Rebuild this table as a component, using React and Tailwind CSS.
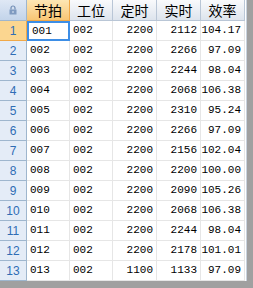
import React from "react";

const rows = [
	["001", "002", "2200", "2112", "104.17"],
	["002", "002", "2200", "2266", "97.09"],
	["003", "002", "2200", "2244", "98.04"],
	["004", "002", "2200", "2068", "106.38"],
	["005", "002", "2200", "2310", "95.24"],
	["006", "002", "2200", "2266", "97.09"],
	["007", "002", "2200", "2156", "102.04"],
	["008", "002", "2200", "2200", "100.00"],
	["009", "002", "2200", "2090", "105.26"],
	["010", "002", "2200", "2068", "106.38"],
	["011", "002", "2200", "2244", "98.04"],
	["012", "002", "2200", "2178", "101.01"],
	["013", "002", "1100", "1133", "97.09"],
];

const headers = ["节拍", "工位", "定时", "实时", "效率"];

const LockIcon = () => (
	<svg width="8" height="10" viewBox="0 0 8 10">
		<path d="M2 4.5V3a2 2 0 0 1 4 0v1.5" fill="none" stroke="#6f8bb3" strokeWidth="1.2" />
		<rect x="0.5" y="4.5" width="7" height="5" fill="#7f9ac0" />
		<rect x="3.5" y="6" width="1" height="2" fill="#dfe8f4" />
	</svg>
);

export default function App() {
	return (
		<div className="w-[253px] h-[288px] bg-[#a0a0a0] overflow-hidden">
			<div className="w-[247px] bg-white border-r border-[#c8d2de]">
				<div className="grid grid-cols-[27px_43px_43px_44px_44px_44px]">
					{/* Header */}
					<div className="h-[21px] flex items-center justify-center bg-gradient-to-b from-[#dfe8f5] to-[#c3d4ea] border-r border-b border-[#9eb6ce]">
						<LockIcon />
					</div>
					{headers.map((h, i) => (
						<div
							key={h}
							className={
								i === 0
									? "h-[21px] flex items-center justify-center text-[14px] text-black bg-gradient-to-b from-[#fde6b4] to-[#f8c674] border-r border-b border-[#f0a848] font-['Noto_Sans_CJK_SC',sans-serif]"
									: "h-[21px] flex items-center justify-center text-[14px] text-black bg-gradient-to-b from-[#f9fafc] to-[#dde4ed] border-r border-b border-[#b9c6d6] font-['Noto_Sans_CJK_SC',sans-serif]"
							}
						>
							{h}
						</div>
					))}

					{/* Rows */}
					{rows.map((r, ri) => (
						<React.Fragment key={ri}>
							<div
								className={
									ri === 0
										? "h-[20px] flex items-center justify-center text-[12px] text-[#2f6db5] bg-[#fbd690] border-r border-b border-[#f0a848] font-['Liberation_Sans',sans-serif]"
										: "h-[20px] flex items-center justify-center text-[12px] text-[#2f6db5] bg-[#e4ecf7] border-r border-b border-[#9eb6ce] font-['Liberation_Sans',sans-serif]"
								}
							>
								{ri + 1}
							</div>
							{r.map((c, ci) => (
								<div
									key={ci}
									className={
										(ci < 2 ? "justify-start pl-[3px] " : "justify-end pr-[3px] ") +
										(ri === 0 && ci === 0
											? "h-[20px] flex items-center text-[11px] text-black border-2 border-[#3d8ee6] font-['Liberation_Mono',monospace]"
											: "h-[20px] flex items-center text-[11px] text-black border-r border-b border-[#e6e6e6] font-['Liberation_Mono',monospace]")
									}
								>
									{c}
								</div>
							))}
						</React.Fragment>
					))}
				</div>
			</div>
		</div>
	);
}
